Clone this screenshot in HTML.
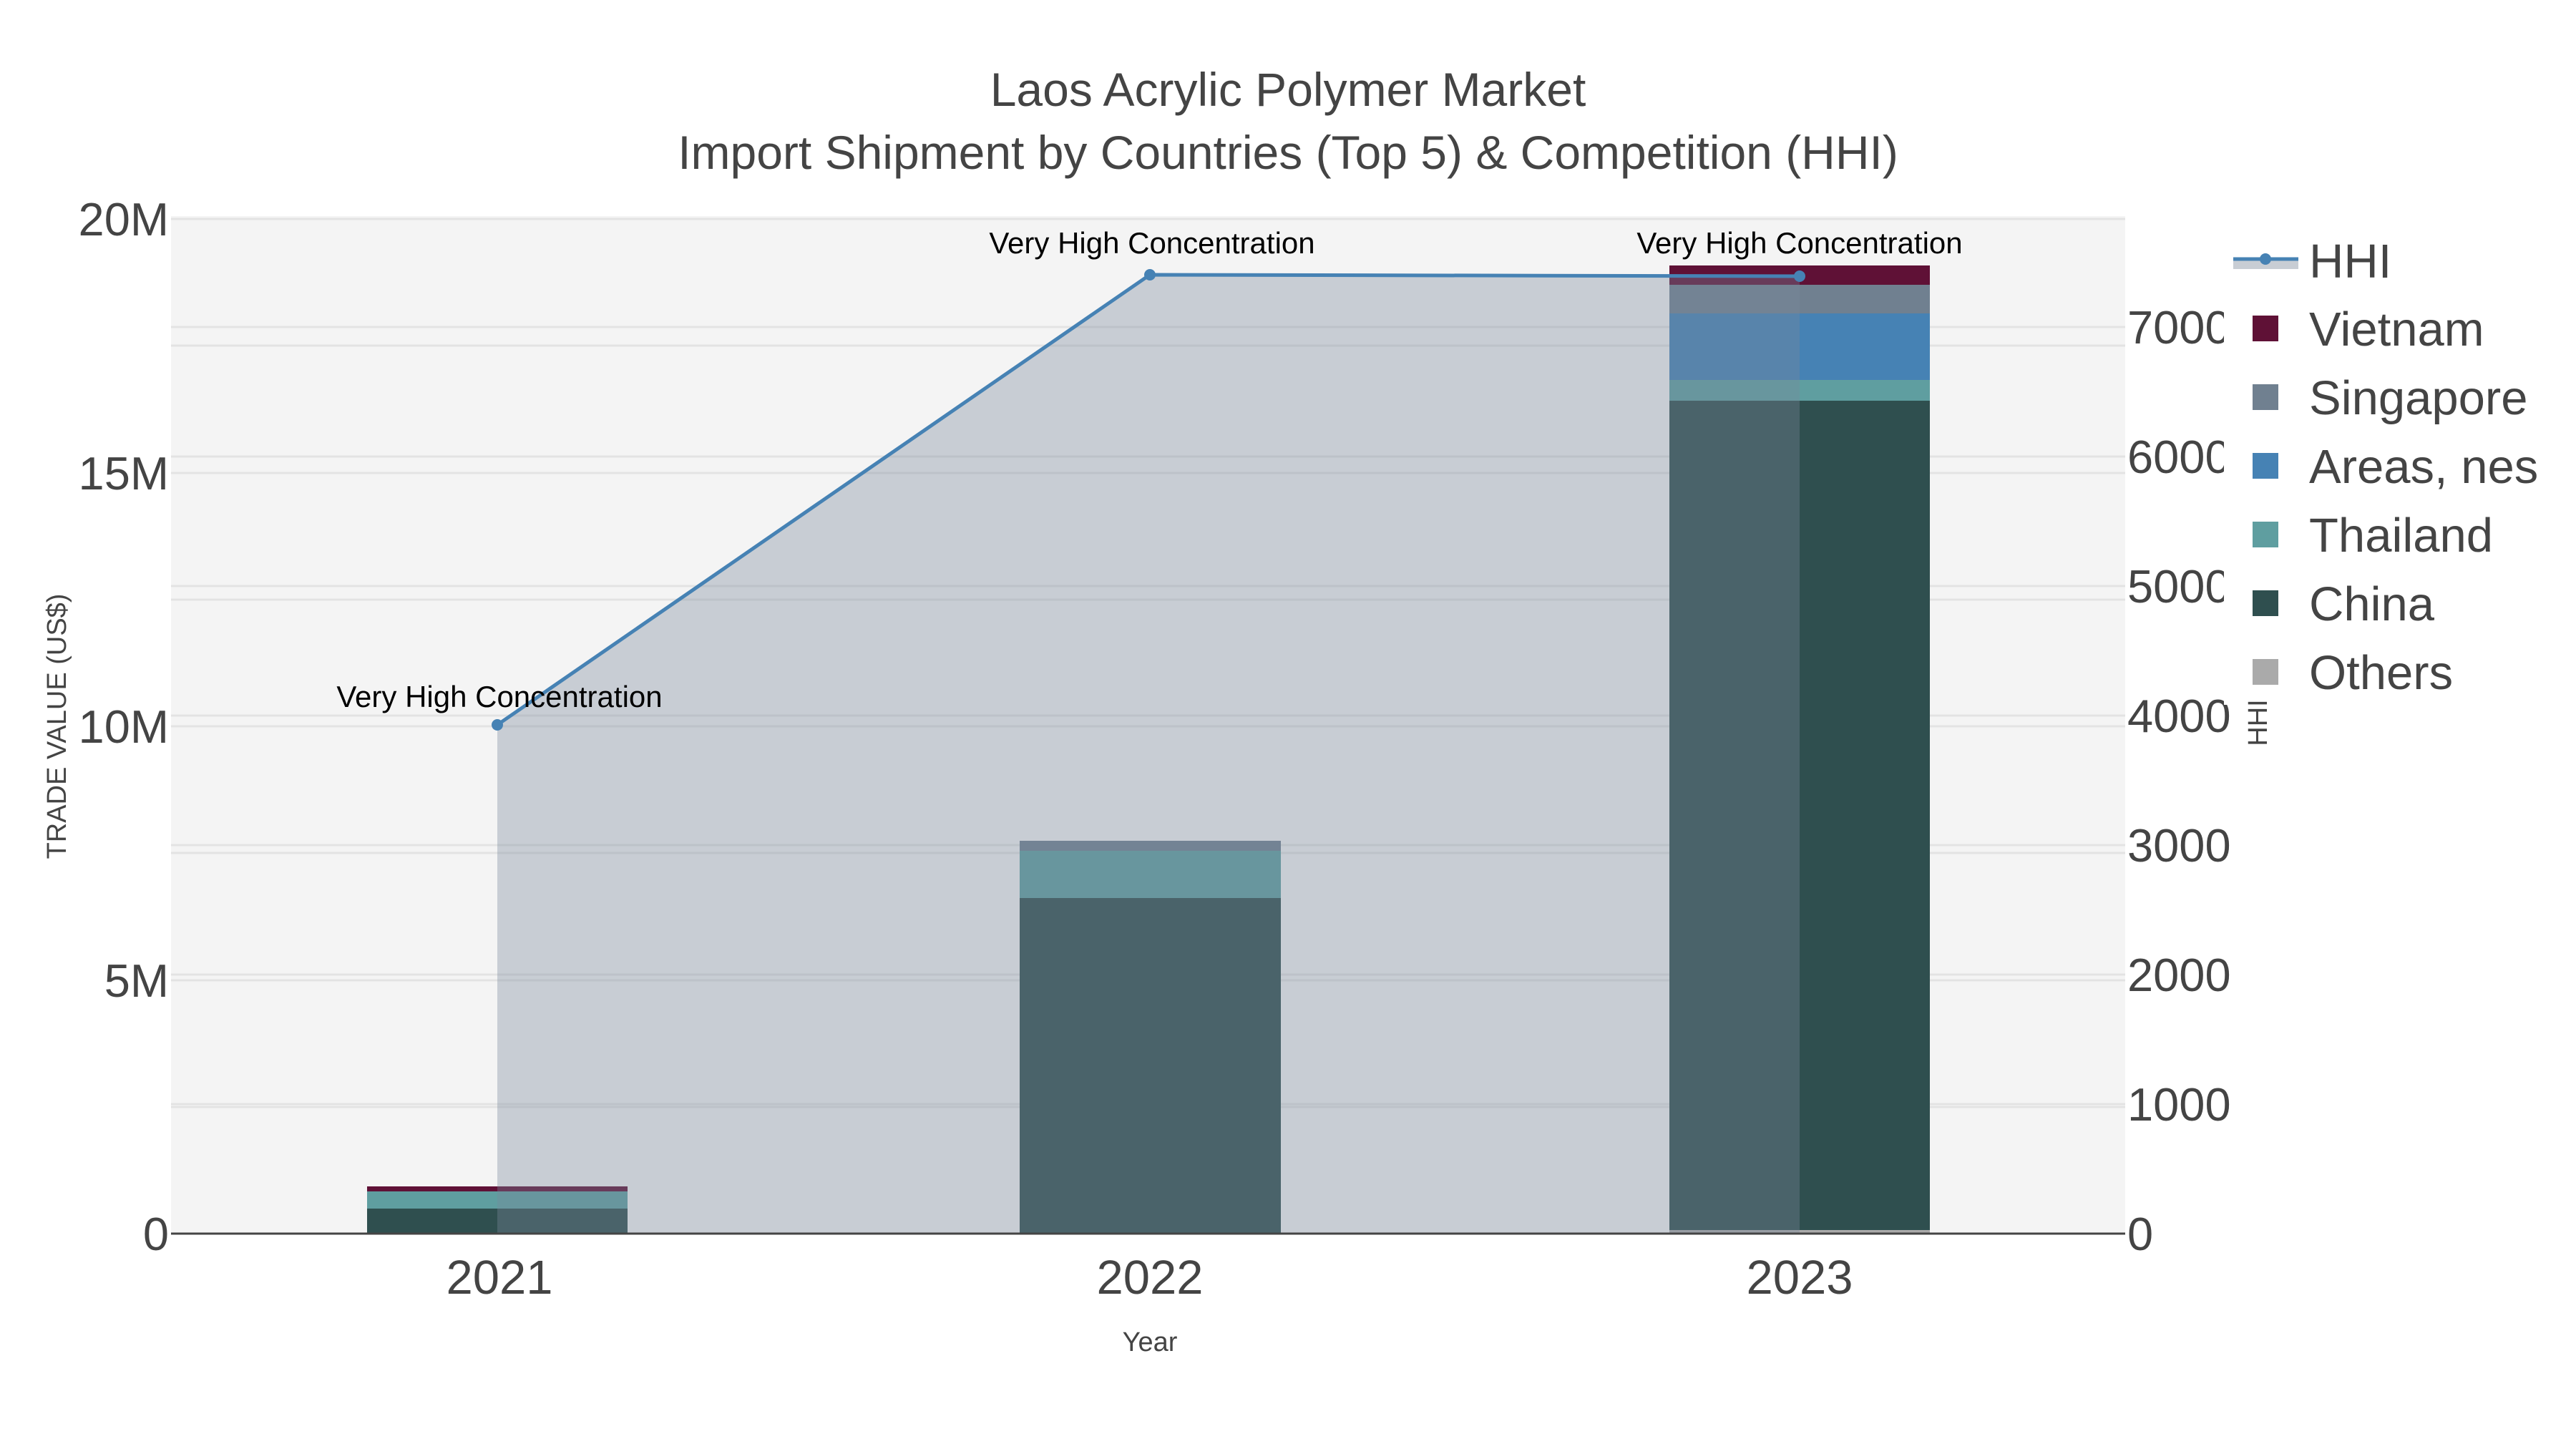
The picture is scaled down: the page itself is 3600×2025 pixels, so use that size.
<!DOCTYPE html>
<html><head><meta charset="utf-8"><style>
html,body{margin:0;padding:0;background:#fff;}
svg{display:block;font-family:"Liberation Sans",Arial,sans-serif;}
</style></head><body>
<svg width="3600" height="2025" viewBox="0 0 3600 2025" xmlns="http://www.w3.org/2000/svg">
<rect x="0" y="0" width="3600" height="2025" fill="#fff"/>
<rect x="239" y="302" width="2731" height="1422" fill="#f4f4f4"/>
<g stroke="#e3e3e3" stroke-width="3">
<line x1="239" x2="2970" y1="306" y2="306"/>
<line x1="239" x2="2970" y1="483" y2="483"/>
<line x1="239" x2="2970" y1="661" y2="661"/>
<line x1="239" x2="2970" y1="838" y2="838"/>
<line x1="239" x2="2970" y1="1015" y2="1015"/>
<line x1="239" x2="2970" y1="1192" y2="1192"/>
<line x1="239" x2="2970" y1="1370" y2="1370"/>
<line x1="239" x2="2970" y1="1547" y2="1547"/>
<line x1="239" x2="2970" y1="457" y2="457"/>
<line x1="239" x2="2970" y1="638" y2="638"/>
<line x1="239" x2="2970" y1="819" y2="819"/>
<line x1="239" x2="2970" y1="1000" y2="1000"/>
<line x1="239" x2="2970" y1="1181" y2="1181"/>
<line x1="239" x2="2970" y1="1362" y2="1362"/>
<line x1="239" x2="2970" y1="1543" y2="1543"/>
</g>
<rect x="513" y="1689" width="364" height="35" fill="#2f4f4f"/>
<rect x="513" y="1665" width="364" height="24" fill="#5f9ea0"/>
<rect x="513" y="1658" width="364" height="7" fill="#5f1136"/>
<rect x="1425" y="1255" width="365" height="469" fill="#2f4f4f"/>
<rect x="1425" y="1189" width="365" height="66" fill="#5f9ea0"/>
<rect x="1425" y="1175" width="365" height="14" fill="#708090"/>
<rect x="2333" y="1719" width="364" height="5" fill="#aaaaaa"/>
<rect x="2333" y="560" width="364" height="1159" fill="#2f4f4f"/>
<rect x="2333" y="531" width="364" height="29" fill="#5f9ea0"/>
<rect x="2333" y="438" width="364" height="93" fill="#4682b4"/>
<rect x="2333" y="398" width="364" height="40" fill="#708090"/>
<rect x="2333" y="371" width="364" height="27" fill="#5f1136"/>
<polygon points="695,1013 1607,384 2515,386 2515,1724 695,1724" fill="rgb(122,136,155)" fill-opacity="0.36"/>
<polyline points="695,1013 1607,384 2515,386" fill="none" stroke="#4682b4" stroke-width="5"/>
<circle cx="695" cy="1013" r="8" fill="#4682b4"/>
<circle cx="1607" cy="384" r="8" fill="#4682b4"/>
<circle cx="2515" cy="386" r="8" fill="#4682b4"/>
<line x1="239" x2="2970" y1="1724" y2="1724" stroke="#444" stroke-width="3"/>
<g font-size="42" fill="#000" text-anchor="middle">
<text x="698" y="988">Very High Concentration</text>
<text x="1610" y="354">Very High Concentration</text>
<text x="2515" y="354">Very High Concentration</text>
</g>
<g font-size="66" fill="#444" text-anchor="middle">
<text x="1800" y="148">Laos Acrylic Polymer Market</text>
<text x="1800" y="236">Import Shipment by Countries (Top 5) &amp; Competition (HHI)</text>
</g>
<g font-size="65" fill="#444" text-anchor="end">
<text x="236" y="329">20M</text>
<text x="236" y="684">15M</text>
<text x="236" y="1038">10M</text>
<text x="236" y="1393">5M</text>
<text x="236" y="1747">0</text>
</g>
<g font-size="67" fill="#444" text-anchor="middle">
<text x="698" y="1808">2021</text>
<text x="1607" y="1808">2022</text>
<text x="2515" y="1808">2023</text>
</g>
<text x="1607" y="1888" font-size="38" fill="#444" text-anchor="middle">Year</text>
<text transform="translate(92,1015) rotate(-90)" font-size="38" fill="#444" text-anchor="middle">TRADE VALUE (US$)</text>
<g font-size="65" fill="#444">
<text x="2973" y="1747">0</text>
<text x="2973" y="1566">1000</text>
<text x="2973" y="1385">2000</text>
<text x="2973" y="1204">3000</text>
<text x="2973" y="1023">4000</text>
<text x="2973" y="842">5000</text>
<text x="2973" y="661">6000</text>
<text x="2973" y="480">7000</text>
</g>
<rect x="3108" y="320" width="492" height="665" fill="#fff"/>
<text transform="translate(3168,1010) rotate(-90)" font-size="38" fill="#444" text-anchor="middle">HHI</text>
<rect x="3121" y="362" width="91" height="14" fill="#c8cdd4"/>
<line x1="3121" x2="3212" y1="362" y2="362" stroke="#4682b4" stroke-width="5"/>
<circle cx="3166" cy="362" r="8" fill="#4682b4"/>
<rect x="3148" y="441" width="36" height="36" fill="#5f1136"/>
<rect x="3148" y="537" width="36" height="36" fill="#708090"/>
<rect x="3148" y="633" width="36" height="36" fill="#4682b4"/>
<rect x="3148" y="729" width="36" height="36" fill="#5f9ea0"/>
<rect x="3148" y="825" width="36" height="36" fill="#2f4f4f"/>
<rect x="3148" y="921" width="36" height="36" fill="#aaaaaa"/>
<g font-size="67" fill="#444">
<text x="3227" y="388">HHI</text>
<text x="3227" y="483">Vietnam</text>
<text x="3227" y="579">Singapore</text>
<text x="3227" y="675">Areas, nes</text>
<text x="3227" y="771">Thailand</text>
<text x="3227" y="867">China</text>
<text x="3227" y="963">Others</text>
</g>
</svg>
</body></html>
